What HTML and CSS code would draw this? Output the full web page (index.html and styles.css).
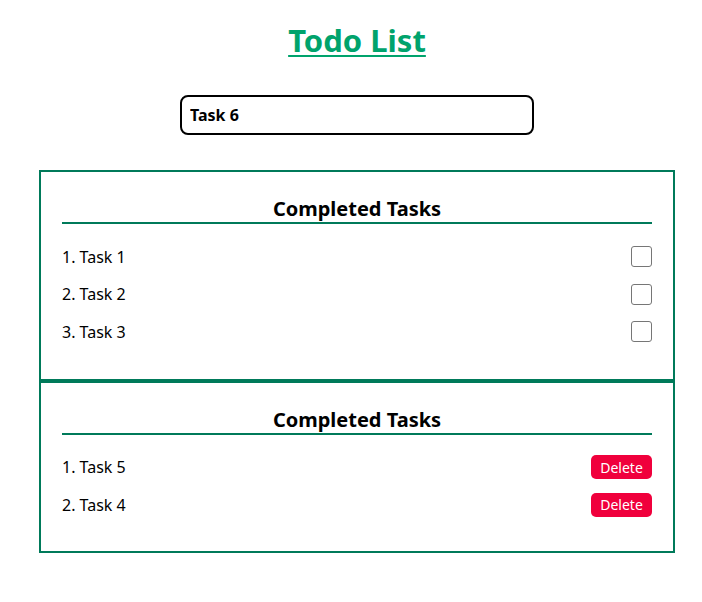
FILE: index.html
```
<!DOCTYPE html>
<html lang="en">
<head>
<meta charset="utf-8">
<title>Todo List</title>
<link rel="stylesheet" href="styles.css">
</head>
<body>
<div class="app">
  <h1 class="title">Todo List</h1>
  <div class="input-row">
    <input class="task-input" type="text" value="Task 6">
  </div>
  <section class="panel">
    <h2 class="panel-title">Completed Tasks</h2>
    <ol class="tasks">
      <li class="task"><span class="task-name">Task 1</span><input class="check" type="checkbox"></li>
      <li class="task"><span class="task-name">Task 2</span><input class="check" type="checkbox"></li>
      <li class="task"><span class="task-name">Task 3</span><input class="check" type="checkbox"></li>
    </ol>
  </section>
  <section class="panel panel-done">
    <h2 class="panel-title">Completed Tasks</h2>
    <ol class="tasks">
      <li class="task"><span class="task-name">Task 5</span><button class="delete" type="button">Delete</button></li>
      <li class="task"><span class="task-name">Task 4</span><button class="delete" type="button">Delete</button></li>
    </ol>
  </section>
</div>
</body>
</html>
```
FILE: styles.css
```
* {
  box-sizing: border-box;
}

html, body {
  margin: 0;
  padding: 0;
  background: #ffffff;
}

body {
  font-family: "Noto Sans", "Open Sans", sans-serif;
  color: #000000;
}

.app {
  width: 636px;
  margin-left: 39px;
}

.title {
  margin: 20px 0 0;
  font-size: 31px;
  line-height: 40px;
  font-weight: 700;
  text-align: center;
  color: #00a36c;
  text-decoration: underline;
  text-decoration-thickness: 2px;
  text-underline-offset: 3px;
}

.input-row {
  display: flex;
  justify-content: center;
  margin-top: 35px;
}

.task-input {
  width: 354px;
  height: 40px;
  border: 2px solid #000000;
  border-radius: 8px;
  padding: 0 8px;
  font-family: inherit;
  font-size: 16px;
  font-weight: 700;
  color: #000000;
  outline: none;
}

.panel {
  margin-top: 35px;
  border: 2px solid #007a5a;
  padding: 26px 21px 28px;
}

.panel-done {
  margin-top: 0;
  padding-bottom: 27px;
}

.panel-title {
  margin: 0;
  padding-bottom: 3px;
  font-size: 20px;
  line-height: 21px;
  font-weight: 700;
  text-align: center;
  border-bottom: 2px solid #007a5a;
}

.tasks {
  list-style: none;
  margin: 14px 0 0;
  padding: 0;
  counter-reset: task;
}

.task {
  display: flex;
  align-items: center;
  height: 37.5px;
  font-size: 16px;
  counter-increment: task;
}

.task-name {
  flex: 1;
}

.task-name::before {
  content: counter(task) ". ";
}

.check {
  appearance: none;
  -webkit-appearance: none;
  margin: 0;
  width: 21px;
  height: 21px;
  border: 1px solid #767676;
  border-radius: 3px;
  background: #ffffff;
}

.delete {
  width: 61px;
  height: 24px;
  border: none;
  border-radius: 5px;
  background: #f0003c;
  color: #ffffff;
  font-family: inherit;
  font-size: 14px;
  padding: 0;
  cursor: pointer;
}
```
